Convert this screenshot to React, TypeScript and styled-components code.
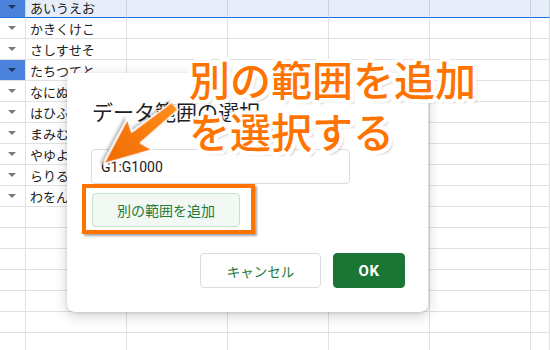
import React from "react";
import styled, { createGlobalStyle } from "styled-components";

const Global = createGlobalStyle`
  html, body { margin: 0; padding: 0; background: #fff; }
  body { width: 550px; height: 350px; overflow: hidden; font-family: Roboto, "Noto Sans CJK JP", sans-serif; }
`;

const Page = styled.div`
  position: relative;
  width: 550px;
  height: 350px;
  overflow: hidden;
`;

const Sheet = styled.div`
  display: grid;
  grid-template-columns: 26px repeat(5, 101px) 1fr;
  grid-auto-rows: 21px;
  margin-top: -3px;
`;

const Cell = styled.div<{ $sel?: boolean; $blue?: boolean }>`
  box-sizing: border-box;
  border-right: 1px solid ${(p) => (p.$sel ? "#c9d3e3" : "#e1e1e1")};
  border-bottom: ${(p) => (p.$sel ? "1px solid #1a6fe0" : "1px solid #e1e1e1")};
  background: ${(p) => (p.$blue ? "#4b82dc" : p.$sel ? "#e7eefa" : "#fff")};
  display: flex;
  align-items: center;
  padding-left: 4px;
  font-size: 13px;
  color: #222;
  font-family: "Noto Sans CJK JP", sans-serif;
  white-space: nowrap;
  overflow: hidden;
`;

const DropCell = styled(Cell)`
  justify-content: center;
  padding-left: 0;
  padding-right: 1px;
`;

const Tri = styled.span<{ $dark?: boolean }>`
  width: 0;
  height: 0;
  border-left: 4px solid transparent;
  border-right: 4px solid transparent;
  border-top: 4px solid ${(p) => (p.$dark ? "#1d3560" : "#7a7a7a")};
`;

const Dialog = styled.div`
  position: absolute;
  left: 67px;
  top: 73px;
  width: 361px;
  height: 239px;
  box-sizing: border-box;
  background: #fff;
  border-radius: 8px;
  box-shadow: 0 4px 14px rgba(0, 0, 0, 0.18), 0 1px 3px rgba(0, 0, 0, 0.12);
  padding: 23px 23px 24px 24px;
  display: flex;
  flex-direction: column;
`;

const Title = styled.div`
  font-family: "Noto Sans CJK JP", sans-serif;
  font-size: 21px;
  line-height: 30px;
  color: #202124;
  margin-left: 1px;
`;

const Input = styled.div`
  margin-top: 23px;
  width: 259px;
  height: 35px;
  box-sizing: border-box;
  border: 1px solid #dadce0;
  border-radius: 4px;
  display: flex;
  align-items: center;
  padding-left: 9px;
  font-family: Roboto, sans-serif;
  font-size: 14px;
  color: #202124;
`;

const AddWrap = styled.div`
  position: relative;
  margin-top: 9px;
  margin-left: 1px;
  align-self: flex-start;
`;

const AddButton = styled.div`
  width: 148px;
  height: 34px;
  box-sizing: border-box;
  border: 1px solid #c3e2cb;
  background: #f2f8f3;
  border-radius: 4px;
  display: flex;
  align-items: center;
  justify-content: center;
  font-family: "Noto Sans CJK JP", sans-serif;
  font-size: 14px;
  color: #1e7a3a;
`;

const Highlight = styled.div`
  position: absolute;
  left: -10px;
  top: -9px;
  right: -15px;
  bottom: -7px;
  border: 4px solid #ff7300;
  box-shadow: 2px 2px 2px rgba(0, 0, 0, 0.35);
`;

const Footer = styled.div`
  margin-top: auto;
  display: flex;
  justify-content: flex-end;
  gap: 12px;
`;

const Btn = styled.div<{ $primary?: boolean }>`
  height: 35px;
  box-sizing: border-box;
  width: ${(p) => (p.$primary ? "72px" : "121px")};
  border-radius: 4px;
  display: flex;
  align-items: center;
  justify-content: center;
  font-family: ${(p) => (p.$primary ? "Roboto, sans-serif" : '"Noto Sans CJK JP", sans-serif')};
  font-size: ${(p) => (p.$primary ? "15px" : "13.5px")};
  font-weight: ${(p) => (p.$primary ? 700 : 400)};
  letter-spacing: ${(p) => (p.$primary ? "0.5px" : "0")};
  color: ${(p) => (p.$primary ? "#fff" : "#1e7a3a")};
  background: ${(p) => (p.$primary ? "#1b7534" : "#fff")};
  border: 1px solid ${(p) => (p.$primary ? "#1b7534" : "#dadce0")};
`;

const Callout = styled.div`
  position: absolute;
  left: 189px;
  top: 52px;
  font-family: "Noto Sans CJK JP", sans-serif;
  font-weight: 500;
  font-size: 41px;
  line-height: 52px;
  color: #ff7300;
  white-space: nowrap;
  text-shadow:
    3px 0 0 #fff, -3px 0 0 #fff, 0 3px 0 #fff, 0 -3px 0 #fff,
    2px 2px 0 #fff, -2px 2px 0 #fff, 2px -2px 0 #fff, -2px -2px 0 #fff,
    4px 1px 0 #fff, -4px 1px 0 #fff, 1px 4px 0 #fff, 1px -4px 0 #fff,
    3px 3px 0 #fff, -3px 3px 0 #fff, 3px -3px 0 #fff, -3px -3px 0 #fff,
    4px 4px 2px rgba(0, 0, 0, 0.18);
`;

const ArrowSvg = styled.svg`
  position: absolute;
  left: 0;
  top: 0;
  pointer-events: none;
`;

const rows = [
  "あいうえお",
  "かきくけこ",
  "さしすせそ",
  "たちつてと",
  "なにぬねの",
  "はひふへほ",
  "まみむめも",
  "やゆよ",
  "らりるれろ",
  "わをん",
];

export default function App() {
  const total = 17;
  const cells: React.ReactNode[] = [];
  for (let r = 0; r < total; r++) {
    const sel = r === 0;
    const label = rows[r];
    const blue = r === 0 || r === 3;
    cells.push(
      <DropCell key={`d${r}`} $sel={sel} $blue={blue}>
        {label !== undefined && <Tri $dark={blue} />}
      </DropCell>
    );
    cells.push(
      <Cell key={`t${r}`} $sel={sel}>
        {label ?? ""}
      </Cell>
    );
    for (let c = 0; c < 5; c++) {
      cells.push(<Cell key={`c${r}-${c}`} $sel={sel} />);
    }
  }

  return (
    <Page>
      <Global />
      <Sheet>{cells}</Sheet>
      <Dialog>
        <Title>データ範囲の選択</Title>
        <Input>G1:G1000</Input>
        <AddWrap>
          <AddButton>別の範囲を追加</AddButton>
          <Highlight />
        </AddWrap>
        <Footer>
          <Btn>キャンセル</Btn>
          <Btn $primary>OK</Btn>
        </Footer>
      </Dialog>
      <Callout>
        別の範囲を追加
        <br />
        を選択する
      </Callout>
      <ArrowSvg width="550" height="350" viewBox="0 0 550 350">
        <defs>
          <linearGradient id="ag" x1="0" y1="0" x2="1" y2="0">
            <stop offset="0" stopColor="#ff8c1a" />
            <stop offset="1" stopColor="#f06a00" />
          </linearGradient>
          <filter id="as" x="-30%" y="-30%" width="160%" height="160%">
            <feDropShadow dx="1.5" dy="2" stdDeviation="1.5" floodColor="#000" floodOpacity="0.3" />
          </filter>
        </defs>
        <g transform="translate(175 106) rotate(141)" filter="url(#as)">
          <path
            d="M0,-5 L50,-7 L45,-20 L92,0 L45,20 L50,7 L0,5 Z"
            fill="url(#ag)"
            stroke="#ffffff"
            strokeWidth="1.5"
            strokeLinejoin="round"
          />
        </g>
      </ArrowSvg>
    </Page>
  );
}
